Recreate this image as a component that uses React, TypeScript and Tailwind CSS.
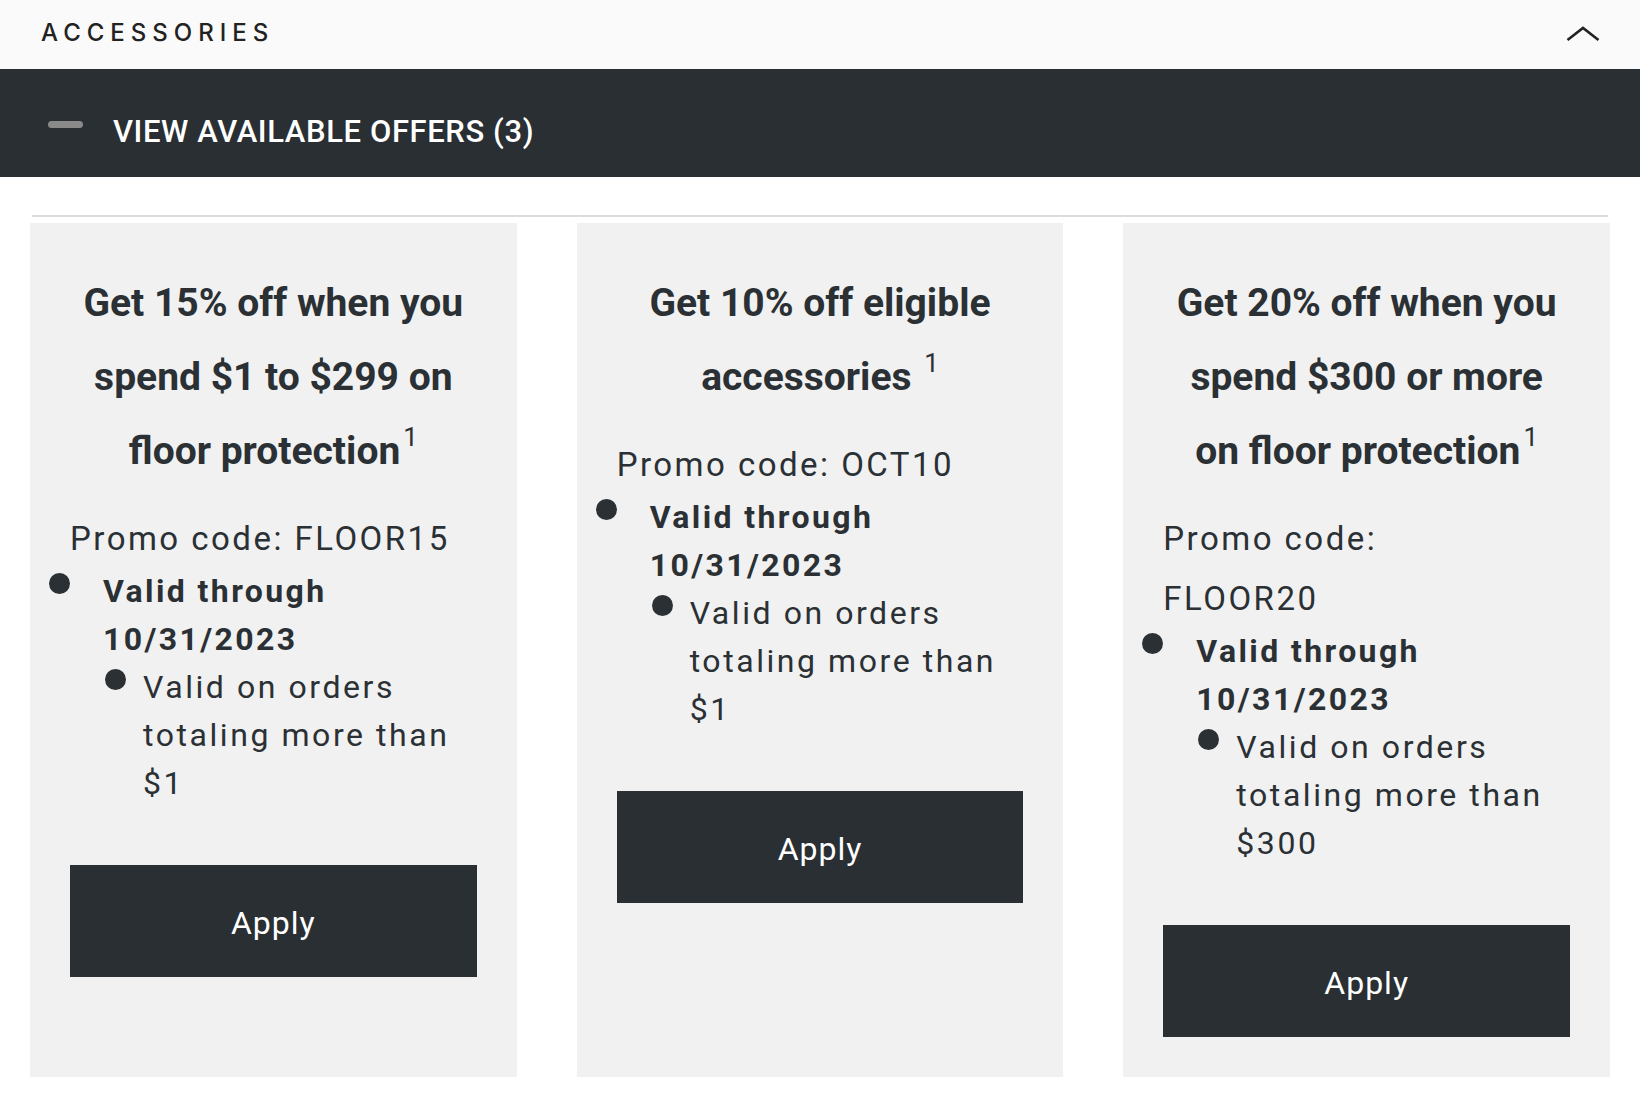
import React from "react";

type Offer = {
  title: React.ReactNode;
  promo: React.ReactNode;
  min: React.ReactNode;
};

const Sup = ({ space = false }: { space?: boolean }) => (
  <>
    {space ? " " : ""}
    <sup className="text-[26px] font-normal top-[-18px] ml-[3px]">1</sup>
  </>
);

const offers: Offer[] = [
  {
    title: (
      <>
        Get 15% off when you
        <br />
        spend $1 to $299 on
        <br />
        floor protection
        <Sup />
      </>
    ),
    promo: <>Promo code: FLOOR15</>,
    min: <>$1</>,
  },
  {
    title: (
      <>
        Get 10% off eligible
        <br />
        accessories
        <Sup space />
      </>
    ),
    promo: <>Promo code: OCT10</>,
    min: <>$1</>,
  },
  {
    title: (
      <>
        Get 20% off when you
        <br />
        spend $300 or more
        <br />
        on floor protection
        <Sup />
      </>
    ),
    promo: (
      <>
        Promo code:
        <br />
        FLOOR20
      </>
    ),
    min: <>$300</>,
  },
];

function Card({ offer }: { offer: Offer }) {
  return (
    <div className="bg-[#f1f1f1] px-[40px] pt-[43px] pb-[40px] flex flex-col text-[#2a3034]">
      <h3 className="text-center font-bold text-[39px] leading-[74px] tracking-[0px]">
        {offer.title}
      </h3>
      <p className="mt-[21px] text-[33px] leading-[60px] tracking-[0.075em]">
        {offer.promo}
      </p>
      <ul className="mt-[-2px] mb-[58px] ml-[-21px]">
        <li className="flex">
          <span className="mt-[6px] w-[21px] h-[21px] rounded-full bg-[#2a3034] shrink-0" />
          <div className="ml-[33px] flex-1">
            <div className="font-bold text-[32px] leading-[48px] tracking-[0.075em]">
              Valid through 10/31/2023
            </div>
            <ul className="ml-[2px]">
              <li className="flex">
                <span className="mt-[6px] w-[21px] h-[21px] rounded-full bg-[#2a3034] shrink-0" />
                <div className="ml-[17px] flex-1 text-[32px] leading-[48px] tracking-[0.08em]">
                  Valid on orders totaling more than {offer.min}
                </div>
              </li>
            </ul>
          </div>
        </li>
      </ul>
      <button className="h-[112px] w-full bg-[#292f33] text-white text-[32px] tracking-[1px] pt-[4px]">
        Apply
      </button>
    </div>
  );
}

export default function App() {
  return (
    <div
      className="w-[1640px] h-[1100px] bg-white overflow-hidden"
      style={{ fontFamily: "Roboto, 'Noto Sans', sans-serif" }}
    >
      <div className="h-[69px] bg-[#fafafa] flex items-center justify-between pl-[41px] pr-[40px]">
        <span
          className="text-[24px] font-medium tracking-[0.25em] text-[#222] mt-[-3px]"
          style={{ fontFamily: "Inter, 'Liberation Sans', sans-serif" }}
        >
          ACCESSORIES
        </span>
        <svg width="34" height="18" viewBox="0 0 34 18" className="mt-[-4px]">
          <polyline
            points="1.5,16 17,4 32.5,16"
            fill="none"
            stroke="#222"
            strokeWidth="2.6"
          />
        </svg>
      </div>
      <div className="h-[108px] bg-[#292f33] flex items-center pl-[48px]">
        <span className="w-[35px] h-[7px] rounded-full bg-[#8a8a8a] mt-[3px]" />
        <span className="ml-[30px] text-white font-medium text-[31px] tracking-[0.6px] mt-[18px]">
          VIEW AVAILABLE OFFERS (3)
        </span>
      </div>
      <div className="pt-[38px] px-[30px]">
        <div className="mx-[2px] h-[2px] bg-[#dcdcdc]" />
        <div className="mt-[6px] grid grid-cols-3 gap-[60px]">
          {offers.map((o, i) => (
            <Card key={i} offer={o} />
          ))}
        </div>
      </div>
    </div>
  );
}
